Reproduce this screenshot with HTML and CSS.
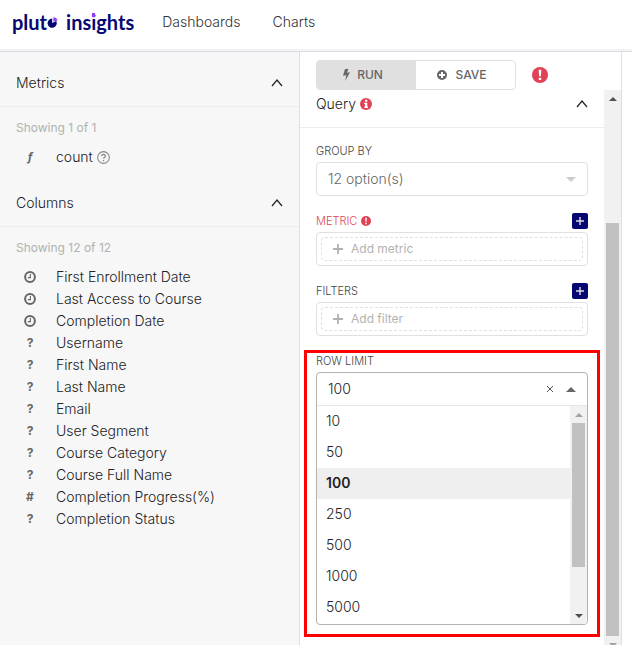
FILE: index.html
```html
<!DOCTYPE html>
<html lang="en">
<head>
    <meta charset="UTF-8">
    <meta name="viewport" content="width=device-width, initial-scale=1">
    <title>Pluto Insights</title>
    <link rel="stylesheet" href="styles.css">
</head>
<body>
    <svg class="defs" aria-hidden="true">
        <symbol id="chevron" viewBox="0 0 12 8"><path d="M1 7 L6 1 L11 7" fill="none" stroke="currentColor" stroke-width="1.2"/></symbol>
        <symbol id="clock" viewBox="0 0 12 12"><circle cx="6" cy="6" r="4.9" fill="none" stroke="currentColor" stroke-width="2"/><path d="M6.4 3 V6.6 H3.8" fill="none" stroke="currentColor" stroke-width="1.1"/></symbol>
        <symbol id="plus" viewBox="0 0 10 10"><path d="M5 0 V10 M0 5 H10" fill="none" stroke="currentColor" stroke-width="1.8"/></symbol>
        <symbol id="alert" viewBox="0 0 16 16"><circle cx="8" cy="8" r="8" fill="currentColor"/><path d="M6.7 2.8 H9.3 L8.9 9.3 H7.1 Z M6.8 10.7 H9.2 V13 H6.8 Z" fill="#fff"/></symbol>
    </svg>

    <header class="navbar">
        <a href="#" class="logo" aria-label="pluto insights">
            <span>plut</span>
            <svg class="logo-pie" viewBox="0 0 12 12"><path d="M5.2 2.6 V7 L9.2 5 A4.6 4.6 0 1 1 5.2 2.6 Z" fill="#060771"/><path d="M6.4 5.4 V1.2 A4.4 4.4 0 0 1 10.6 4.6 Z" fill="#8a3ffc"/></svg>
            <span>ins<span class="logo-i">i</span>ghts</span>
        </a>
        <nav>
            <a href="#">Dashboards</a>
            <a href="#">Charts</a>
        </nav>
    </header>

    <main class="explore">
        <aside class="datasource">
            <section>
                <button type="button" class="section-header">Metrics <svg class="chevron"><use href="#chevron"/></svg></button>
                <div class="section-body">
                    <p class="showing">Showing 1 of 1</p>
                    <ul class="fields">
                        <li><span class="type fx">ƒ</span>count <svg class="help" viewBox="0 0 12 12"><circle cx="6" cy="6" r="5.4" fill="none" stroke="currentColor"/><path d="M4.3 4.9 C4.3 2.5 7.8 2.6 7.7 4.7 C7.7 6 6 5.9 6 7.2 M6 8.2 V9.5" fill="none" stroke="currentColor" stroke-width="1.2"/></svg></li>
                    </ul>
                </div>
            </section>
            <section>
                <button type="button" class="section-header">Columns <svg class="chevron"><use href="#chevron"/></svg></button>
                <div class="section-body">
                    <p class="showing">Showing 12 of 12</p>
                    <ul class="fields">
                        <li><span class="type"><svg><use href="#clock"/></svg></span>First Enrollment Date</li>
                        <li><span class="type"><svg><use href="#clock"/></svg></span>Last Access to Course</li>
                        <li><span class="type"><svg><use href="#clock"/></svg></span>Completion Date</li>
                        <li><span class="type">?</span>Username</li>
                        <li><span class="type">?</span>First Name</li>
                        <li><span class="type">?</span>Last Name</li>
                        <li><span class="type">?</span>Email</li>
                        <li><span class="type">?</span>User Segment</li>
                        <li><span class="type">?</span>Course Category</li>
                        <li><span class="type">?</span>Course Full Name</li>
                        <li><span class="type">#</span>Completion Progress(%)</li>
                        <li><span class="type">?</span>Completion Status</li>
                    </ul>
                </div>
            </section>
        </aside>

        <section class="controls">
            <div class="actions">
                <div class="btn-group">
                    <button type="button" class="btn btn-run"><svg class="bolt" viewBox="0 0 8 12"><path d="M3 0 H6.4 L4.9 3.7 L8 3.2 L3.2 12 L4.3 6.2 L1 6.8 Z" fill="currentColor"/></svg>RUN</button>
                    <button type="button" class="btn btn-save"><svg class="circle-plus" viewBox="0 0 12 12"><path fill-rule="evenodd" d="M6 1 A5 5 0 1 1 6 11 A5 5 0 1 1 6 1 Z M5 3 V5 H3 V7 H5 V9 H7 V7 H9 V5 H7 V3 Z" fill="currentColor"/></svg>SAVE</button>
                </div>
                <svg class="alert-lg"><use href="#alert"/></svg>
            </div>

            <div class="scroll-area">
                <div class="query">
                    <button type="button" class="section-header query-header">
                        <span class="query-title">Query <svg class="info" viewBox="0 0 12 12"><circle cx="6" cy="6" r="6" fill="currentColor"/><path d="M5 1.8 H7.3 V3.7 H5 Z M4.2 4.7 H7.3 V8.7 H8 V10 H4.2 V8.7 H5 V6 H4.2 Z" fill="#fff"/></svg></span>
                        <svg class="chevron"><use href="#chevron"/></svg>
                    </button>
                    <form class="query-form">
                        <div class="control">
                            <div class="control-label"><label for="group-by">GROUP BY</label></div>
                            <div class="select-wrap">
                                <select id="group-by" class="box">
                                    <option>12 option(s)</option>
                                </select>
                            </div>
                        </div>
                        <div class="control">
                            <div class="control-label error">
                                <span class="label-text">METRIC <svg class="alert-sm"><use href="#alert"/></svg></span>
                                <button type="button" class="add" aria-label="Add metric"><svg><use href="#plus"/></svg></button>
                            </div>
                            <div class="box drop">
                                <button type="button" class="drop-btn"><svg><use href="#plus"/></svg>Add metric</button>
                            </div>
                        </div>
                        <div class="control">
                            <div class="control-label">
                                <span class="label-text">FILTERS</span>
                                <button type="button" class="add" aria-label="Add filter"><svg><use href="#plus"/></svg></button>
                            </div>
                            <div class="box drop">
                                <button type="button" class="drop-btn"><svg><use href="#plus"/></svg>Add filter</button>
                            </div>
                        </div>
                        <div class="control highlighted">
                            <div class="control-label"><label for="row-limit">ROW LIMIT</label></div>
                            <div class="combo">
                                <div class="combo-value">
                                    <input type="text" id="row-limit" value="100" role="combobox" aria-expanded="true" aria-controls="row-limit-menu">
                                    <button type="button" class="clear" aria-label="Clear"><svg viewBox="0 0 8 8"><path d="M1 1 L7 7 M7 1 L1 7" stroke="currentColor" fill="none"/></svg></button>
                                    <span class="arrow"></span>
                                </div>
                                <div class="menu">
                                    <ul id="row-limit-menu" role="listbox" aria-label="Row limit">
                                        <li role="option">10</li>
                                        <li role="option">50</li>
                                        <li role="option" class="selected" aria-selected="true">100</li>
                                        <li role="option">250</li>
                                        <li role="option">500</li>
                                        <li role="option">1000</li>
                                        <li role="option">5000</li>
                                    </ul>
                                    <div class="scrollbar">
                                        <span class="scroll-btn"><i class="tri up light"></i></span>
                                        <span class="track"><i class="thumb"></i></span>
                                        <span class="scroll-btn"><i class="tri down"></i></span>
                                    </div>
                                </div>
                            </div>
                        </div>
                    </form>
                </div>
                <div class="scrollbar">
                    <span class="scroll-btn"><i class="tri up"></i></span>
                    <span class="track panel-track"><i class="thumb"></i></span>
                    <span class="scroll-btn"><i class="tri down light"></i></span>
                </div>
            </div>
        </section>
    </main>
</body>
</html>
```
FILE: styles.css
```css
* {
    box-sizing: border-box;
}
html {
    height: 100%;
    overflow: hidden;
}
body {
    margin: 0;
    height: calc(100vh + 8px);
    display: flex;
    flex-direction: column;
    overflow: hidden;
    font-family: Inter, "Open Sans", sans-serif;
    font-size: 14px;
    font-weight: 300;
    line-height: 22px;
    color: #222;
    background: #fff;
}
button, input, select {
    font: inherit;
    color: inherit;
    margin: 0;
    padding: 0;
    border: none;
    background: none;
}
button {
    cursor: pointer;
}
ul, p {
    margin: 0;
    padding: 0;
    list-style: none;
}
a {
    color: #333;
    text-decoration: none;
}
svg {
    display: block;
    flex: none;
}
.defs {
    position: absolute;
    width: 0;
    height: 0;
}

/* top bar */
.navbar {
    flex: none;
    display: flex;
    align-items: center;
    height: 52px;
    padding: 0 12px 8px;
    border-bottom: 1px solid #d9dde4;
    box-shadow: inset 0 -2px #f0f2f6;
}
.logo {
    display: flex;
    align-items: center;
    font-family: Lato, sans-serif;
    font-size: 20px;
    font-weight: 700;
    color: #060771;
}
.logo-pie {
    width: 12px;
    height: 12px;
    margin-right: 7px;
}
.logo-i {
    position: relative;
}
.logo-i::after {
    content: "";
    position: absolute;
    top: 3px;
    left: 1px;
    width: 3px;
    height: 4px;
    background: #8a3ffc;
}
nav {
    display: flex;
    gap: 32px;
    margin-left: 28px;
}

/* layout */
.explore {
    flex: 1;
    min-height: 0;
    display: grid;
    grid-template-columns: 300fr 322fr 10fr;
}
.datasource {
    background: #f7f7f7;
    border-right: 1px solid #dcdfe4;
}
.controls {
    display: flex;
    flex-direction: column;
    min-height: 0;
    border-right: 1px solid #dcdfe4;
}

/* collapsible sections */
.section-header {
    display: flex;
    justify-content: space-between;
    align-items: center;
    width: 100%;
    padding: 20px 16px 12px;
    border-bottom: 1px solid #ececec;
    text-align: left;
}
.chevron {
    width: 12px;
    height: 8px;
}
.section-body {
    padding: 10px 16px 4px;
}
.showing {
    margin-bottom: 7px;
    font-size: 12px;
    font-weight: 400;
    color: #b2b2b2;
}
.fields li {
    display: flex;
    align-items: center;
}
.type {
    display: flex;
    justify-content: center;
    width: 28px;
    margin-right: 12px;
    font-size: 12px;
    font-weight: 700;
    color: #666;
}
.type svg {
    width: 12px;
    height: 12px;
}
.fx {
    font-style: italic;
}
.help {
    width: 13px;
    height: 13px;
    margin-left: 4px;
    color: #888;
}

/* run / save */
.actions {
    flex: none;
    display: flex;
    align-items: center;
    gap: 16px;
    padding: 8px 16px 0;
}
.btn-group {
    display: flex;
    width: 200px;
    height: 30px;
    border: 1px solid #e0e0e0;
    border-radius: 4px;
    overflow: hidden;
}
.btn {
    flex: 1;
    display: flex;
    justify-content: center;
    align-items: center;
    gap: 7px;
    padding-right: 8px;
    font-size: 12px;
    font-weight: 500;
    color: #666;
}
.btn-run {
    background: #e0e0e0;
}
.bolt {
    width: 8px;
    height: 12px;
}
.circle-plus {
    width: 12px;
    height: 12px;
}
.alert-lg {
    width: 16px;
    height: 16px;
    color: #e04355;
}

/* query panel */
.scroll-area {
    flex: 1;
    min-height: 0;
    display: flex;
}
.query {
    flex: 1;
}
.query-header {
    padding: 3px 16px 12px;
}
.query-title, .label-text {
    display: flex;
    align-items: center;
    gap: 4px;
}
.info {
    width: 12px;
    height: 12px;
    color: #e04355;
}
.query-form {
    display: flex;
    flex-direction: column;
    gap: 16px;
    padding: 14px 16px;
}
.control-label {
    display: flex;
    justify-content: space-between;
    align-items: center;
    height: 18px;
    margin-bottom: 2px;
    font-size: 11px;
    color: #444;
}
.control-label.error {
    color: #e04355;
}
.alert-sm {
    width: 10px;
    height: 10px;
}
.add {
    display: flex;
    justify-content: center;
    align-items: center;
    width: 16px;
    height: 16px;
    border-radius: 2px;
    background: #060771;
    color: #ddd;
}
.add svg {
    width: 8px;
    height: 8px;
}
.box {
    display: block;
    width: 100%;
    height: 34px;
    border: 1px solid #e0e0e0;
    border-radius: 4px;
    background: #fff;
}
.select-wrap {
    position: relative;
}
.select-wrap::after {
    content: "";
    position: absolute;
    right: 12px;
    top: 15px;
    border: 5px solid transparent;
    border-top-color: #ccc;
    border-bottom: none;
}
select.box {
    appearance: none;
    padding: 0 11px;
    color: #666;
}
.drop {
    padding: 4px;
}
.drop-btn {
    display: flex;
    align-items: center;
    gap: 8px;
    width: 100%;
    height: 24px;
    padding: 0 11px;
    border: 1px dashed #e0e0e0;
    border-radius: 4px;
    font-size: 12px;
    font-weight: 400;
    color: #b2b2b2;
}
.drop-btn svg {
    width: 10px;
    height: 10px;
}

/* row limit */
.highlighted {
    position: relative;
}
.highlighted::after {
    content: "";
    position: absolute;
    inset: -2px -12px -12px;
    border: 3px solid #f00;
    pointer-events: none;
}
.combo {
    border: 1px solid #b2b2b2;
    border-radius: 4px;
    overflow: hidden;
}
.combo-value {
    display: flex;
    align-items: center;
    height: 33px;
    padding: 0 11px;
    border-bottom: 1px solid #e6e6e6;
}
.combo-value input {
    flex: 1;
    min-width: 0;
    outline: none;
}
.clear {
    margin-right: 12px;
    color: #555;
}
.clear svg {
    width: 8px;
    height: 8px;
}
.arrow {
    border: 5px solid transparent;
    border-top: none;
    border-bottom-color: #666;
}
.menu {
    display: flex;
}
.menu ul {
    flex: 1;
    padding-bottom: 1px;
}
.menu li {
    height: 31px;
    padding: 0 9px;
    line-height: 30px;
}
.menu .selected {
    background: #efefef;
    font-weight: 600;
}

/* scrollbars */
.scrollbar {
    flex: none;
    display: flex;
    flex-direction: column;
    width: 17px;
    background: #f1f1f1;
}
.scroll-btn {
    display: flex;
    justify-content: center;
    align-items: center;
    height: 17px;
}
.tri {
    border: 4px solid transparent;
    color: #505050;
}
.tri.up {
    border-top: none;
    border-bottom-color: currentColor;
}
.tri.down {
    border-bottom: none;
    border-top-color: currentColor;
}
.tri.light {
    color: #a3a3a3;
}
.track {
    flex: 1;
    display: flex;
    flex-direction: column;
    padding: 0 2px;
}
.thumb {
    height: 78%;
    background: #c1c1c1;
}
.panel-track {
    justify-content: flex-end;
}
```
